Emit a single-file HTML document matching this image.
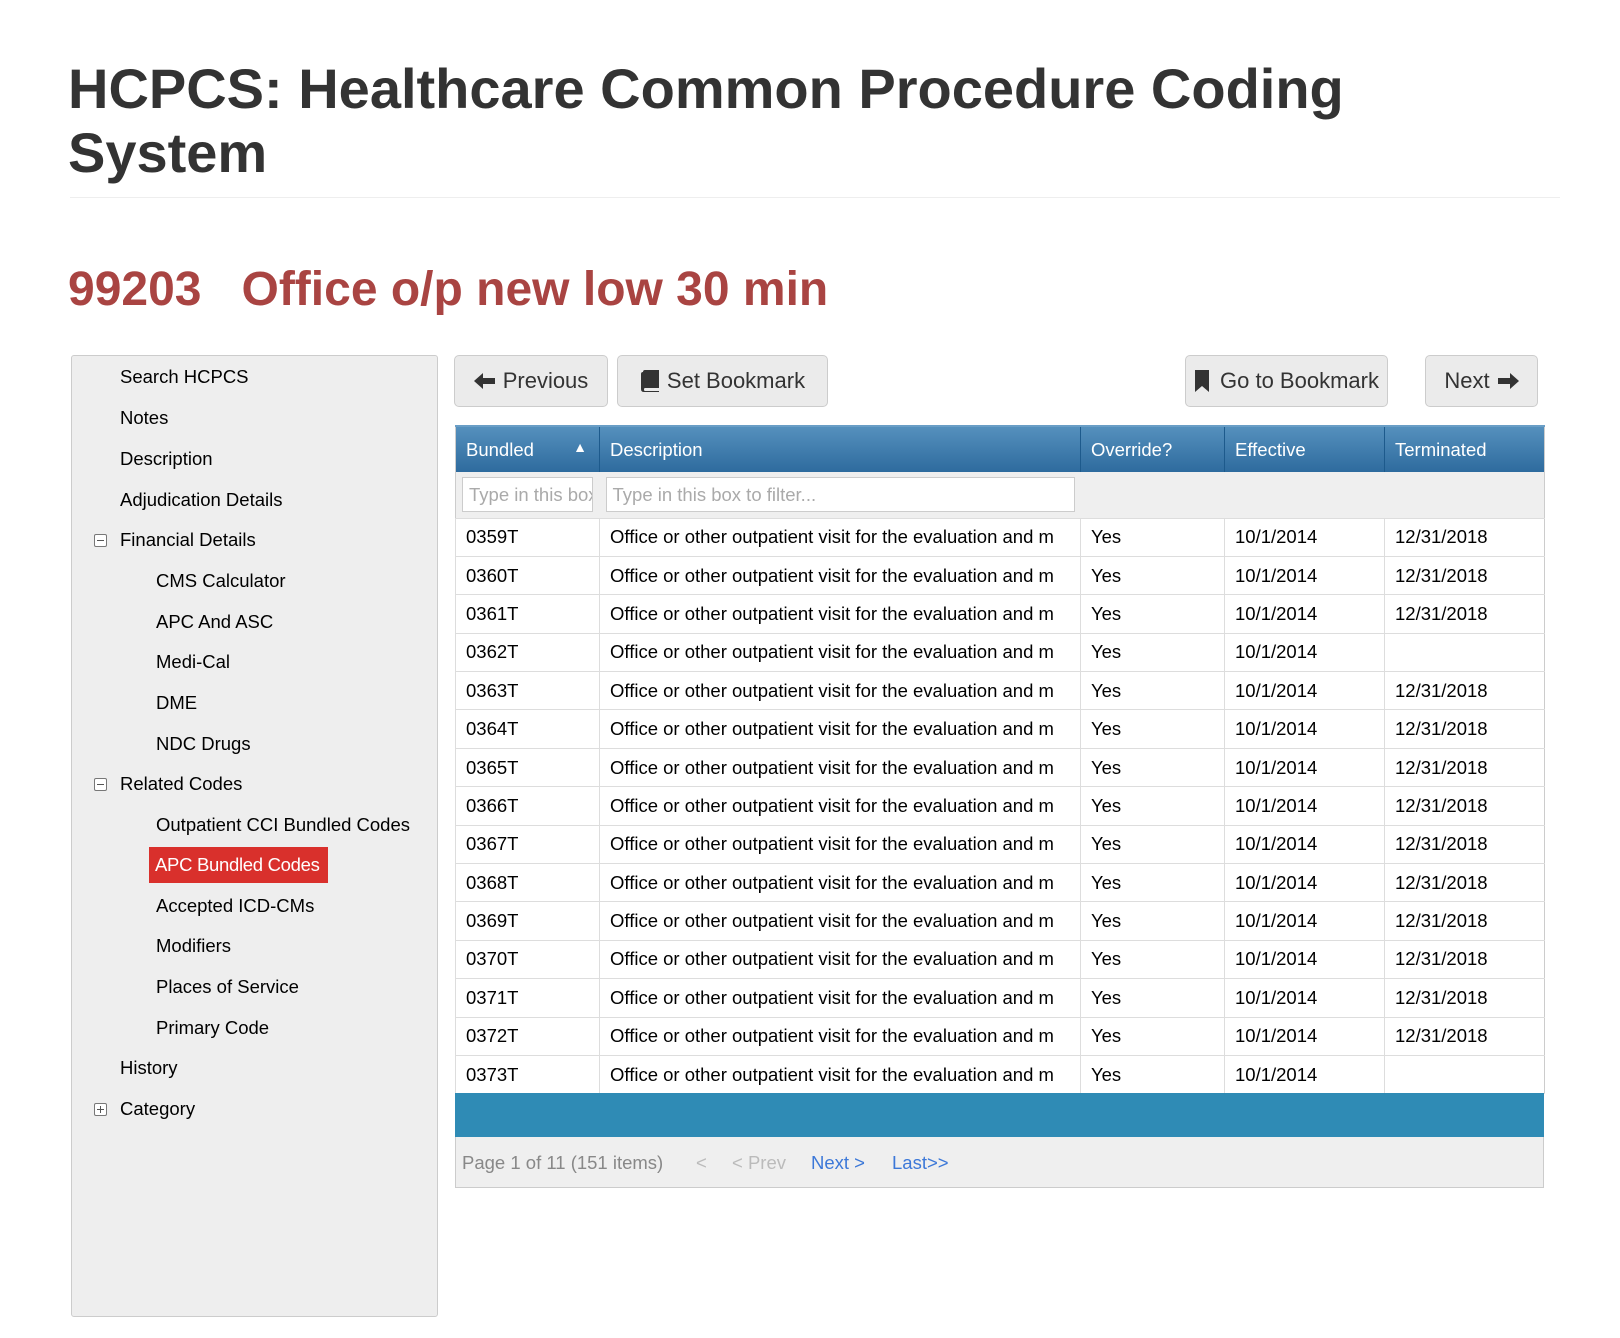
<!DOCTYPE html>
<html><head><style>
*{box-sizing:border-box;margin:0;padding:0}
body{width:1620px;height:1338px;background:#fff;font-family:"Liberation Sans",sans-serif;color:#333;position:relative;overflow:hidden}
.abs{position:absolute}
h1{position:absolute;left:68px;top:57px;font-size:56px;line-height:64px;font-weight:bold;color:#333;width:1400px}
.rule{left:70px;top:197px;width:1490px;height:1px;background:#eee}
h2{position:absolute;left:68px;top:262px;font-size:48px;font-weight:bold;color:#a94442;white-space:pre;line-height:56px}
.side{left:71px;top:355px;width:367px;height:962px;background:#eee;border:1px solid #ccc;border-radius:3px}
.si{position:absolute;font-size:18.5px;color:#000;line-height:24px}
.ic{position:absolute;width:13px;height:13px;border:1px solid #777;border-radius:2px;background:#fff}
.ic:before{content:"";position:absolute;left:2px;top:5px;width:7px;height:1px;background:#555}
.ic.p:after{content:"";position:absolute;left:5px;top:2px;width:1px;height:7px;background:#555}
.btn{position:absolute;top:355px;height:52px;background:#ebebeb;border:1px solid #ccc;border-radius:5px;font-size:22px;color:#333;display:flex;align-items:center;justify-content:center;gap:7px}
table{position:absolute;left:455px;top:425px;width:1089px;border-collapse:collapse;font-size:18.5px;table-layout:fixed;border-left:1px solid #ccc;border-right:1px solid #ccc}
th{height:46px;background:linear-gradient(#5590bd,#2e6b9e);color:#fff;font-weight:normal;text-align:left;padding-left:10px;border-left:1px solid #1d5a8c;border-top:2px solid #6a9ec6}
td{height:38.4px;padding-left:10px;border-left:1px solid #ddd;border-bottom:1px solid #ddd;white-space:nowrap;overflow:hidden;color:#000}
tr.f td{background:#efefef;height:46px;border-left:none;padding-left:6px}
.inp{height:35px;border:1px solid #ccc;background:#fff;color:#aaa;font-size:18.5px;padding:6px 6px;white-space:nowrap;overflow:hidden}
.band{left:455px;top:1093px;width:1089px;height:44px;background:#2f8bb5}
.pager{left:455px;top:1137px;width:1089px;height:51px;background:#efefef;border:1px solid #ccc;border-top:none;font-size:18.5px}
.pager span{position:absolute;top:15px}
</style></head><body>
<h1>HCPCS: Healthcare Common Procedure Coding System</h1>
<div class="abs rule"></div>
<h2>99203   Office o/p new low 30 min</h2>

<div class="abs side"></div>
<div class="si" style="left:120px;top:365px">Search HCPCS</div>
<div class="si" style="left:120px;top:406px">Notes</div>
<div class="si" style="left:120px;top:447px">Description</div>
<div class="si" style="left:120px;top:488px">Adjudication Details</div>
<div class="ic" style="left:94px;top:534px"></div>
<div class="si" style="left:120px;top:528px">Financial Details</div>
<div class="si" style="left:156px;top:569px">CMS Calculator</div>
<div class="si" style="left:156px;top:610px">APC And ASC</div>
<div class="si" style="left:156px;top:650px">Medi-Cal</div>
<div class="si" style="left:156px;top:691px">DME</div>
<div class="si" style="left:156px;top:732px">NDC Drugs</div>
<div class="ic" style="left:94px;top:778px"></div>
<div class="si" style="left:120px;top:772px">Related Codes</div>
<div class="si" style="left:156px;top:813px">Outpatient CCI Bundled Codes</div>
<div class="abs" style="left:149px;top:847px;width:179px;height:36px;background:#d9302c"></div>
<div class="si" style="left:155px;top:853px;color:#fff;letter-spacing:-0.3px">APC Bundled Codes</div>
<div class="si" style="left:156px;top:894px">Accepted ICD-CMs</div>
<div class="si" style="left:156px;top:934px">Modifiers</div>
<div class="si" style="left:156px;top:975px">Places of Service</div>
<div class="si" style="left:156px;top:1016px">Primary Code</div>
<div class="si" style="left:120px;top:1056px">History</div>
<div class="ic p" style="left:94px;top:1103px"></div>
<div class="si" style="left:120px;top:1097px">Category</div>

<div class="btn" style="left:454px;width:154px"><svg width="22" height="18" viewBox="0 0 22 18"><path d="M0 9 L9 1 L9 6 L21 6 L21 12 L9 12 L9 17 Z" fill="#333"/></svg>Previous</div>
<div class="btn" style="left:617px;width:211px"><svg width="20" height="22" viewBox="0 0 20 22"><path d="M3 2 Q3 0 5 0 L19 0 L19 18 L5 18 Q4 18 4 19.5 Q4 21 5 21 L19 21 L19 22 L4 22 Q1 22 1 19 L1 4 Q1 2 3 2Z" fill="#333"/></svg>Set Bookmark</div>
<div class="btn" style="left:1185px;width:203px;gap:10px"><svg width="16" height="22" viewBox="0 0 16 22"><path d="M1 0 L15 0 L15 22 L8 16 L1 22 Z" fill="#333"/></svg>Go to Bookmark</div>
<div class="btn" style="left:1425px;width:113px">Next<svg width="22" height="18" viewBox="0 0 22 18"><path d="M22 9 L13 1 L13 6 L1 6 L1 12 L13 12 L13 17 Z" fill="#333"/></svg></div>

<table>
<colgroup><col style="width:144px"><col style="width:481px"><col style="width:144px"><col style="width:160px"><col style="width:160px"></colgroup>
<tr><th style="border-left:none">Bundled <span style="float:right;margin-right:12px;font-size:14px">▲</span></th><th>Description</th><th>Override?</th><th>Effective</th><th>Terminated</th></tr>
<tr class="f"><td><div class="inp" style="width:131px">Type in this box</div></td><td><div class="inp" style="width:469px">Type in this box to filter...</div></td><td></td><td></td><td></td></tr>
<tr><td>0359T</td><td>Office or other outpatient visit for the evaluation and m</td><td>Yes</td><td>10/1/2014</td><td>12/31/2018</td></tr>
<tr><td>0360T</td><td>Office or other outpatient visit for the evaluation and m</td><td>Yes</td><td>10/1/2014</td><td>12/31/2018</td></tr>
<tr><td>0361T</td><td>Office or other outpatient visit for the evaluation and m</td><td>Yes</td><td>10/1/2014</td><td>12/31/2018</td></tr>
<tr><td>0362T</td><td>Office or other outpatient visit for the evaluation and m</td><td>Yes</td><td>10/1/2014</td><td></td></tr>
<tr><td>0363T</td><td>Office or other outpatient visit for the evaluation and m</td><td>Yes</td><td>10/1/2014</td><td>12/31/2018</td></tr>
<tr><td>0364T</td><td>Office or other outpatient visit for the evaluation and m</td><td>Yes</td><td>10/1/2014</td><td>12/31/2018</td></tr>
<tr><td>0365T</td><td>Office or other outpatient visit for the evaluation and m</td><td>Yes</td><td>10/1/2014</td><td>12/31/2018</td></tr>
<tr><td>0366T</td><td>Office or other outpatient visit for the evaluation and m</td><td>Yes</td><td>10/1/2014</td><td>12/31/2018</td></tr>
<tr><td>0367T</td><td>Office or other outpatient visit for the evaluation and m</td><td>Yes</td><td>10/1/2014</td><td>12/31/2018</td></tr>
<tr><td>0368T</td><td>Office or other outpatient visit for the evaluation and m</td><td>Yes</td><td>10/1/2014</td><td>12/31/2018</td></tr>
<tr><td>0369T</td><td>Office or other outpatient visit for the evaluation and m</td><td>Yes</td><td>10/1/2014</td><td>12/31/2018</td></tr>
<tr><td>0370T</td><td>Office or other outpatient visit for the evaluation and m</td><td>Yes</td><td>10/1/2014</td><td>12/31/2018</td></tr>
<tr><td>0371T</td><td>Office or other outpatient visit for the evaluation and m</td><td>Yes</td><td>10/1/2014</td><td>12/31/2018</td></tr>
<tr><td>0372T</td><td>Office or other outpatient visit for the evaluation and m</td><td>Yes</td><td>10/1/2014</td><td>12/31/2018</td></tr>
<tr><td>0373T</td><td>Office or other outpatient visit for the evaluation and m</td><td>Yes</td><td>10/1/2014</td><td></td></tr>
</table>
<div class="abs band"></div>
<div class="abs pager">
<span style="left:6px;color:#888">Page 1 of 11 (151 items)</span>
<span style="left:240px;color:#bbb">&lt;</span>
<span style="left:276px;color:#bbb">&lt; Prev</span>
<span style="left:355px;color:#3c78d8">Next &gt;</span>
<span style="left:436px;color:#3c78d8">Last&gt;&gt;</span>
</div>
</body></html>
